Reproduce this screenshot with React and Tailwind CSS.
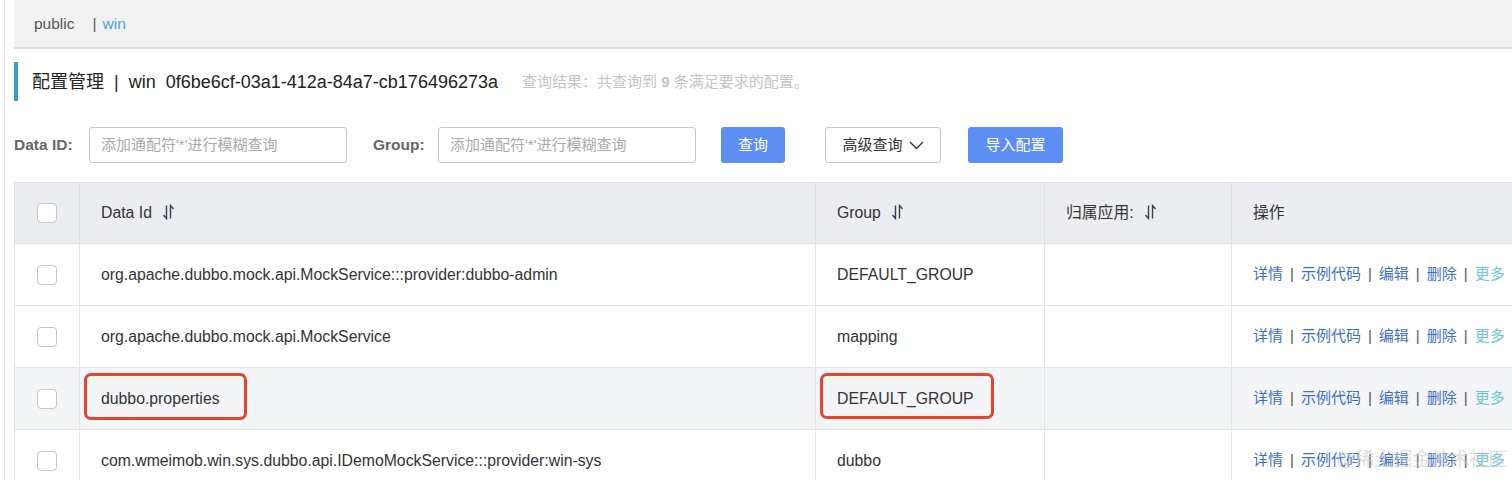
const font = { fontFamily: '"Liberation Sans", "Noto Sans CJK SC", sans-serif' }

function SortIcon() {
  return (
    <svg width="13" height="16" viewBox="0 0 13 16" className="inline-block ml-[10px] -mt-1 text-gray-700" fill="none" stroke="currentColor" strokeWidth="1.4">
      <path d="M4.5 1.5 V14.5 L1.5 11" />
      <path d="M8.5 14.5 V1.5 L11.5 5" />
    </svg>
  )
}

function Checkbox() {
  return <div className="w-[20px] h-[20px] rounded-[4px] border border-[#c4c6cc] bg-white mx-auto" />
}

function Actions() {
  return (
    <div className="flex items-center gap-[7px] text-[15px] whitespace-nowrap">
      <span className="text-[#3b6fc6]">详情</span>
      <span className="text-[#555]">|</span>
      <span className="text-[#3b6fc6]">示例代码</span>
      <span className="text-[#555]">|</span>
      <span className="text-[#3b6fc6]">编辑</span>
      <span className="text-[#555]">|</span>
      <span className="text-[#3b6fc6]">删除</span>
      <span className="text-[#555]">|</span>
      <span className="text-[#6cc7d9]">更多</span>
    </div>
  )
}

const rows = [
  { id: 'org.apache.dubbo.mock.api.MockService:::provider:dubbo-admin', group: 'DEFAULT_GROUP' },
  { id: 'org.apache.dubbo.mock.api.MockService', group: 'mapping' },
  { id: 'dubbo.properties', group: 'DEFAULT_GROUP', mark: true },
  { id: 'com.wmeimob.win.sys.dubbo.api.IDemoMockService:::provider:win-sys', group: 'dubbo' },
]

export default function App() {
  return (
    <div className="relative w-[1512px] h-[480px] overflow-hidden bg-white text-[#333]" style={font}>
      <div className="absolute left-[4px] top-0 bottom-0 w-px bg-[#e6e6e6]" />
      <div className="pl-[14px]">
        <div className="h-[49px] bg-[#f2f2f2] border-b-2 border-[#dcdcdc] flex items-center pl-[20px] pt-[1px] text-[15.5px]">
          <span className="text-[#555]">public</span>
          <span className="ml-[18px] text-[#555]">|</span>
          <span className="ml-[6px] text-[#46a8d8]">win</span>
        </div>

        <div className="mt-[13px] h-[39px] border-l-4 border-[#3d9ad1] flex items-center pl-[14px] pt-[2px]">
          <span className="text-[18px] text-[#222] whitespace-nowrap">配置管理 &nbsp;|&nbsp; win &nbsp;0f6be6cf-03a1-412a-84a7-cb176496273a</span>
          <span className="ml-[24px] text-[15px] text-[#c4c4c4] whitespace-nowrap">查询结果：共查询到 <b className="font-bold">9</b> 条满足要求的配置。</span>
        </div>

        <div className="mt-[26px] flex items-center h-[36px] text-[15px]">
          <span className="font-bold text-[#666] w-[75px] text-[15.5px]">Data ID:</span>
          <div className="w-[258px] h-[36px] border border-[#c8c8c8] rounded-[3px] flex items-center px-[11px] text-[#aaa]">添加通配符'*'进行模糊查询</div>
          <span className="font-bold text-[#666] ml-[26px] w-[65px] text-[15.5px]">Group:</span>
          <div className="w-[258px] h-[36px] border border-[#c8c8c8] rounded-[3px] flex items-center px-[11px] text-[#aaa]">添加通配符'*'进行模糊查询</div>
          <div className="ml-[25px] w-[64px] h-[36px] rounded-[3px] bg-[#5d8ef2] text-white flex items-center justify-center">查询</div>
          <div className="ml-[40px] w-[116px] h-[36px] rounded-[3px] border border-[#c8c8c8] flex items-center justify-center gap-[6px] text-[#333]">
            高级查询
            <svg width="15" height="10" viewBox="0 0 15 10" fill="none" stroke="#333" strokeWidth="1.3"><path d="M1 2 L7.5 8.5 L14 2" /></svg>
          </div>
          <div className="ml-[27px] w-[95px] h-[36px] rounded-[3px] bg-[#5d8ef2] text-white flex items-center justify-center">导入配置</div>
        </div>

        <table className="mt-[19px] border-collapse text-[15.8px] table-fixed w-[1560px]">
          <colgroup>
            <col className="w-[65px]" />
            <col className="w-[736px]" />
            <col className="w-[229px]" />
            <col className="w-[187px]" />
            <col className="w-[343px]" />
          </colgroup>
          <thead>
            <tr className="h-[61px] bg-[#ebedf0]">
              <th className="border border-[#dfe1e5]"><Checkbox /></th>
              <th className="border border-[#dfe1e5] text-left font-normal pl-[21px]">Data Id<SortIcon /></th>
              <th className="border border-[#dfe1e5] text-left font-normal pl-[21px]">Group<SortIcon /></th>
              <th className="border border-[#dfe1e5] text-left font-normal pl-[21px]">归属应用:<SortIcon /></th>
              <th className="border border-[#dfe1e5] text-left font-normal pl-[21px]">操作</th>
            </tr>
          </thead>
          <tbody>
            {rows.map((r, i) => (
              <tr key={i} className={`h-[62px] ${r.mark ? 'bg-[#f4f5f7]' : 'bg-white'}`}>
                <td className="border border-[#e3e4e8]"><Checkbox /></td>
                <td className="border border-[#e3e4e8] pl-[21px] whitespace-nowrap">
                  {r.mark ? (
                    <span className="relative inline-block">
                      {r.id}
                      <span className="absolute -left-[17px] -top-[14px] w-[163px] h-[47px] border-[3px] border-[#e24530] rounded-[7px]" />
                    </span>
                  ) : r.id}
                </td>
                <td className="border border-[#e3e4e8] pl-[21px] whitespace-nowrap">
                  {r.mark ? (
                    <span className="relative inline-block">
                      {r.group}
                      <span className="absolute -left-[17px] -top-[14px] w-[174px] h-[46px] border-[3px] border-[#e24530] rounded-[7px]" />
                    </span>
                  ) : r.group}
                </td>
                <td className="border border-[#e3e4e8]" />
                <td className="border border-[#e3e4e8] pl-[21px]"><Actions /></td>
              </tr>
            ))}
          </tbody>
        </table>
      </div>
      <div className="absolute left-[1336px] top-[446px] text-[19px] text-[#c8c8c8]/60 whitespace-nowrap">@稀土掘金技术社区</div>
    </div>
  )
}
